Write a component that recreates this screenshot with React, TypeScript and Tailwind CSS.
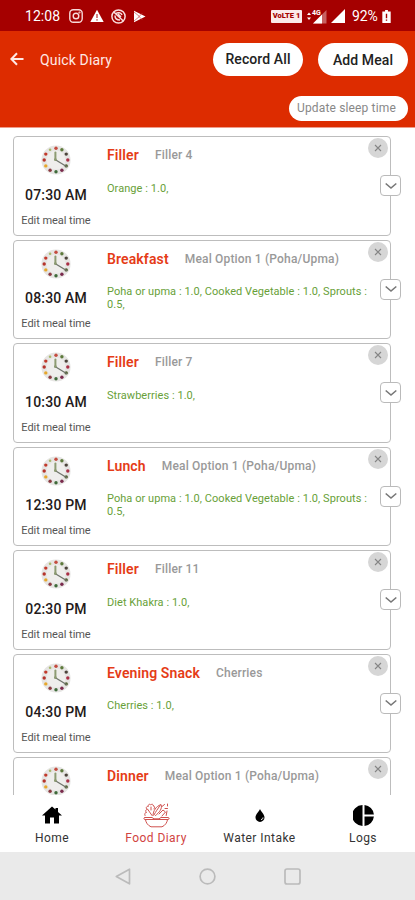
import React from "react";

type Meal = { time?: string; title: string; option: string; items?: string };

const meals: Meal[] = [
  { time: "07:30 AM", title: "Filler", option: "Filler 4", items: "Orange : 1.0," },
  { time: "08:30 AM", title: "Breakfast", option: "Meal Option 1 (Poha/Upma)", items: "Poha or upma : 1.0, Cooked Vegetable : 1.0, Sprouts : 0.5," },
  { time: "10:30 AM", title: "Filler", option: "Filler 7", items: "Strawberries : 1.0," },
  { time: "12:30 PM", title: "Lunch", option: "Meal Option 1 (Poha/Upma)", items: "Poha or upma : 1.0, Cooked Vegetable : 1.0, Sprouts : 0.5," },
  { time: "02:30 PM", title: "Filler", option: "Filler 11", items: "Diet Khakra : 1.0," },
  { time: "04:30 PM", title: "Evening Snack", option: "Cherries", items: "Cherries : 1.0," },
  { title: "Dinner", option: "Meal Option 1 (Poha/Upma)" },
];

const dots = ["#c44b3f", "#5d7a3c", "#4c443b", "#a92f45", "#50612f", "#7a2b4d", "#3f6b3a", "#8c3a40", "#e6a72c", "#b5342c", "#c2392b", "#a9b86a"];

function Clock() {
  return (
    <svg className="h-[30px] w-[30px] shrink-0" viewBox="0 0 30 30">
      <circle cx="15" cy="15" r="14.6" fill="#e6e5e3" />
      <circle cx="15" cy="15" r="9.5" fill="#efeeec" />
      {dots.map((c, i) => {
        const a = (i * Math.PI) / 6;
        return <circle key={i} cx={15 + 11.8 * Math.sin(a)} cy={15 - 11.8 * Math.cos(a)} r={i === 11 ? 1.3 : 1.7} fill={c} />;
      })}
      <path d="M14.4 15V7.5" stroke="#8d9b72" strokeWidth="2" strokeLinecap="round" />
      <path d="M14 14.5L25.5 21.5" stroke="#6f746b" strokeWidth="1.3" strokeLinecap="round" />
      <circle cx="14.4" cy="14.6" r="1.3" fill="#8d9b72" />
    </svg>
  );
}

function MealCard({ meal }: { meal: Meal }) {
  return (
    <article className="relative flex h-[99.5px] w-[378px] shrink-0 rounded-[4px] border border-[#bdbdbd] bg-white">
      <div className="flex w-[84px] shrink-0 flex-col items-center pt-[8px] whitespace-nowrap">
        <Clock />
        {meal.time && (
          <>
            <span className="mt-[10.500px] text-[14px] leading-[18px] font-medium tracking-[0.16px] text-[#241a1a]">{meal.time}</span>
            <span className="mt-[10px] text-[11px] leading-[14px] tracking-[-0.05px] text-[#555]">Edit meal time</span>
          </>
        )}
      </div>
      <div className="w-[276px] pt-[9px] pl-[9px]">
        <div className="flex items-center gap-[16px] leading-[18px] font-medium whitespace-nowrap">
          <h2 className="text-[14px] font-semibold tracking-[0.12px] text-[#e53c17]">{meal.title}</h2>
          <span className="text-[12px] tracking-[0.18px] text-[#999]">{meal.option}</span>
        </div>
        {meal.items && <p className="mt-[17.500px] text-[11px] leading-[13px] tracking-[0.05px] text-[#689f38]">{meal.items}</p>}
      </div>
      <button className="absolute top-[1px] right-[2px] flex h-5 w-5 items-center justify-center rounded-full bg-[#d6d6d6]" aria-label="Remove meal">
        <svg className="h-2 w-2" viewBox="0 0 8 8" stroke="#858585" strokeWidth="1.1"><path d="M1 1l6 6M7 1L1 7" /></svg>
      </button>
      <button className="absolute top-[38px] -right-[11px] flex h-[21px] w-[21px] items-center justify-center rounded-[4px] border border-[#bababa] bg-white" aria-label="Expand meal">
        <svg className="h-2 w-3" viewBox="0 0 12 8" fill="none" stroke="#777" strokeWidth="1.6"><path d="M.7 1.5L6 6l5.300-4.500" /></svg>
      </button>
    </article>
  );
}

function StatusBar() {
  return (
    <div className="flex h-[31px] items-center justify-between bg-[#a50000] pt-[1px] pr-6 pl-[25px] text-[14px] text-white">
      <div className="flex items-center">
        <span className="w-[44px] tracking-[0.05px]">12:08</span>
        <svg className="h-[14px] w-[14px]" viewBox="0 0 14 14" fill="none" stroke="#f7dada" strokeWidth="1.4">
          <rect x=".8" y=".8" width="12.400" height="12.400" rx="3.500" /><circle cx="7" cy="7" r="2.800" /><circle cx="10.500" cy="3.500" r=".4" />
        </svg>
        <svg className="ml-[7px] h-[14px] w-[14px]" viewBox="0 0 14 14">
          <path d="M7 .8L13.700 13H.3z" fill="#fff" /><path d="M7 5v4M7 10.200v1.400" stroke="#a50000" strokeWidth="1" />
        </svg>
        <svg className="ml-[7px] h-[15px] w-[15px]" viewBox="0 0 15 15" fill="none" stroke="#f9dede" strokeWidth="1.500">
          <circle cx="7.500" cy="7.500" r="6.600" /><path d="M2.800 3l9.500 9M5 4.500c2-1.500 5-.8 6 1.500M4 6.500c0 3 2 4.500 5 4.500M7 5l3 3" />
        </svg>
        <svg className="ml-[7px] h-[13px] w-[13px]" viewBox="0 0 13 13">
          <path d="M1 .7L12.500 6.500 1 12.300z" fill="#fff" /><path d="M1 2l5.500 4.500L1 11M6 6.500l3-3M6 6.500l3 3" stroke="#c66" strokeWidth=".8" fill="none" />
        </svg>
      </div>
      <div className="flex items-center">
        <span className="flex h-[13px] w-[31px] items-center justify-center rounded-[1px] bg-[#fbeaea] text-[7.500px] font-black whitespace-nowrap text-[#a50000]">VoLTE 1</span>
        <svg className="ml-[4px] h-[15px] w-[21px]" viewBox="0 0 21 15">
          <path d="M1 6l2-2.500L5 6zM1 8.500l2 2.500 2-2.500z" fill="#fff" />
          <path d="M7 14.500L20.500 1v13.500z" fill="#c76161" />
          <path d="M7 14.500l9-9v9z" fill="#fff" />
          <text x="6" y="6" fontSize="7" fontWeight="700" fill="#fff">4G</text>
        </svg>
        <svg className="ml-[4px] h-[14px] w-[14px]" viewBox="0 0 14 14"><path d="M0 14L14 0v14z" fill="#fff" /></svg>
        <span className="ml-[7px] w-[27px] tracking-[-0.1px]">92%</span>
        <svg className="ml-[3px] h-[13px] w-[9px]" viewBox="0 0 9 14">
          <path d="M3 0h3v1.500h3V14H0V1.500h3z" fill="#fff" /><path d="M4.500 4v5M4.500 10.200v1.400" stroke="#a50000" strokeWidth="1.500" />
        </svg>
      </div>
    </div>
  );
}

function BowlIcon() {
  return (
    <svg className="h-[26px] w-[27px]" viewBox="0 0 27 26" fill="none" stroke="#d0524f" strokeWidth="1" strokeLinecap="round" strokeLinejoin="round">
      <path d="M2 15.500h7l2 1.300h5l2-1.300h7c1.500 0 1.500 2 0 2H2c-1.500 0-1.500-2 0-2zM2.500 17.800c.5 3 2.200 5.500 5.500 7h11c3.300-1.500 5-4 5.500-7" />
      <path d="M2 13.500c-.8-2 .2-3 1.500-3-1.500-1.500-.8-3 .8-3-2-1.500-.7-3.500 1-3-.5-2 1.500-3 2.500-1.500 1-1.500 3-.5 2.500 1 1.500 0 2 2 .5 3M4.500 7l4.500 6.500M8 5v3" />
      <path d="M10 13.500c.2-5 3-9 8-11 1.700 4-1.700 8-5.500 11M11 13c2-4 3.500-5.500 6-9.500" />
      <path d="M16 12l4-4 2.500 2-3.500 4M19 4.500l2.500-2M24.500 2v2M24 9l-.8 4.500M22 6.500h2.500" />
    </svg>
  );
}

function BottomNav() {
  return (
    <nav className="relative flex h-[57px] shrink-0 bg-white text-[12px] leading-[14px] tracking-[0.45px] text-[#333]">
      <div className="flex w-[104px] flex-col items-center">
        <div className="flex h-[36px] items-end pb-[7px]">
          <svg className="h-[18px] w-[20px]" viewBox="0 0 20 18"><path d="M10 .5l3.500 3.100V2H16v3.900l4 3.600h-3V17.500h-5v-6H8v6H3v-8H0z" fill="#000" /></svg>
        </div>
        <span>Home</span>
      </div>
      <div className="flex w-[104px] flex-col items-center text-[#d1433f]">
        <div className="flex h-[36px] items-end pb-[3px]"><BowlIcon /></div>
        <span className="tracking-[0.45px]">Food Diary</span>
      </div>
      <div className="flex w-[103px] flex-col items-center">
        <div className="flex h-[36px] items-end pb-[9px]">
          <svg className="h-[13px] w-[10px]" viewBox="0 0 10 13"><path d="M5 0C4 2.500.5 5.300.5 8.400a4.500 4.500 0 009 0C9.500 5.300 6 2.500 5 0z" fill="#000" /><path d="M6 10.500c1.500 0 2-1 2-2" stroke="#fff" strokeWidth="1" fill="none" /></svg>
        </div>
        <span>Water Intake</span>
      </div>
      <div className="flex w-[104px] flex-col items-center">
        <div className="flex h-[36px] items-end pb-[5px]">
          <svg className="h-[21px] w-[21px]" viewBox="0 0 21 21" fill="#000"><path d="M9.500.1v20.800a10.400 10.400 0 010-20.800zM11.500.1a10.400 10.400 0 019.400 9.400h-9.400zM11.500 11.500h9.400a10.400 10.400 0 01-9.400 9.400z" /></svg>
        </div>
        <span>Logs</span>
      </div>
    </nav>
  );
}

export default function App() {
  return (
    <div className="flex h-[900px] w-[415px] flex-col overflow-hidden bg-white font-['Roboto','Liberation_Sans',sans-serif]">
      <StatusBar />
      <header className="h-[97px] shrink-0 border-b border-[#ef9c8a] bg-[#dd2c00] pt-[12px] pr-[7px]">
        <div className="flex h-[33px] items-center pl-[10px]">
          <svg className="mb-[2px] h-[14px] w-[14px]" viewBox="0 0 14 14" fill="none" stroke="#ffe9e5" strokeWidth="2"><path d="M13.500 7H1.800M7 1.200L1.400 7 7 12.800" /></svg>
          <h1 className="mt-[2px] ml-[16px] text-[14px] tracking-[0.15px] text-[#ffe9e5]">Quick Diary</h1>
          <button className="ml-auto h-[33px] w-[90px] rounded-full bg-white text-[14px] font-medium tracking-[0.1px] whitespace-nowrap text-[#222]">Record All</button>
          <button className="ml-[15px] h-[33px] w-[90px] rounded-full bg-white pt-[1px] text-[14px] font-medium tracking-[0.1px] whitespace-nowrap text-[#222]">Add Meal</button>
        </div>
        <div className="flex justify-end pt-[19.500px]">
          <button className="h-[25px] w-[119px] rounded-full bg-white pr-[4px] text-[12px] tracking-[0.15px] whitespace-nowrap text-[#888]">Update sleep time</button>
        </div>
      </header>
      <main className="flex min-h-0 flex-1 flex-col gap-1 overflow-hidden pt-[8px] pl-[13px]">
        {meals.map((m, i) => <MealCard key={i} meal={m} />)}
      </main>
      <BottomNav />
      <footer className="flex h-[48px] shrink-0 items-center justify-center gap-[68px] bg-[#eaeaea]">
        <svg className="h-[17px] w-[16px]" viewBox="0 0 16 17" fill="none" stroke="#bbb" strokeWidth="1.700" strokeLinejoin="round"><path d="M14.500 1.200v14.600L1.300 8.500z" /></svg>
        <svg className="h-[17px] w-[17px]" viewBox="0 0 17 17" fill="none" stroke="#bbb" strokeWidth="1.700"><circle cx="8.500" cy="8.500" r="7.400" /></svg>
        <svg className="h-[17px] w-[17px]" viewBox="0 0 17 17" fill="none" stroke="#bbb" strokeWidth="1.700"><rect x="1" y="1" width="15" height="15" rx="2" /></svg>
      </footer>
    </div>
  );
}
